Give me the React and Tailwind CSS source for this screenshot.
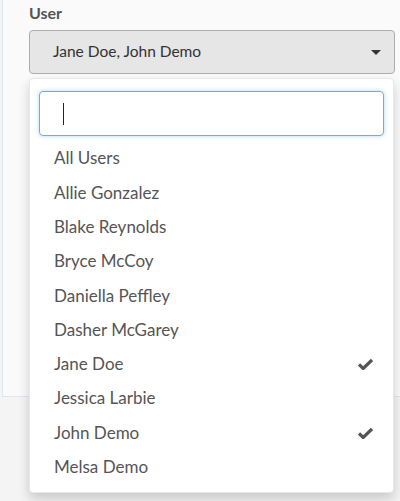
const users = [
  { name: 'All Users' },
  { name: 'Allie Gonzalez' },
  { name: 'Blake Reynolds' },
  { name: 'Bryce McCoy' },
  { name: 'Daniella Peffley' },
  { name: 'Dasher McGarey' },
  { name: 'Jane Doe', selected: true },
  { name: 'Jessica Larbie' },
  { name: 'John Demo', selected: true },
  { name: 'Melsa Demo' },
];

function Check() {
  return (
    <svg width="15" height="12" viewBox="0 0 15 12" className="text-[#555]">
      <path d="M1 6.5 L5.2 10.5 L14 2" fill="none" stroke="currentColor" strokeWidth="3.2" strokeLinejoin="miter" />
    </svg>
  );
}

export default function App() {
  return (
    <div className="w-[400px] h-[501px] overflow-hidden bg-[#f4f4f4] font-['Lato',sans-serif]">
      <div className="relative ml-[2px] h-[397px] border-l border-b border-[#dde6ef] bg-[#fafafa]">
        <div className="pl-[26px] pr-[5px] pt-[1px]">
          <div className="text-[16px] font-bold text-[#555] leading-[24px]">User</div>
          <button className="mt-[5px] flex h-[44px] w-full items-center justify-between rounded-[4px] border border-[#adadad] bg-[#e6e6e6] pl-[23px] pr-[13px] text-[15.5px] text-[#333]">
            <span>Jane Doe, John Demo</span>
            <span className="h-0 w-0 border-x-[5px] border-t-[5px] border-x-transparent border-t-[#333]" />
          </button>
        </div>

        <div className="absolute left-[26px] top-[78px] w-[365px] rounded-[4px] bg-white pb-[8px] pt-[12px] shadow-[0_6px_12px_rgba(0,0,0,0.175)] border border-[#e8e8e8]">
          <div className="px-[9px]">
            <div className="flex h-[45px] items-center rounded-[4px] border border-[#66afe9] pl-[23px] shadow-[0_0_4px_rgba(102,175,233,0.5)]">
              <span className="h-[22px] w-px bg-[#222]" />
            </div>
          </div>
          <ul className="mt-[5px]">
            {users.map((u) => (
              <li key={u.name} className="flex h-[34.3px] items-center justify-between pl-[24px] pr-[20px] text-[17px] text-[#555]">
                <span>{u.name}</span>
                {u.selected && <Check />}
              </li>
            ))}
          </ul>
        </div>
      </div>
    </div>
  );
}
